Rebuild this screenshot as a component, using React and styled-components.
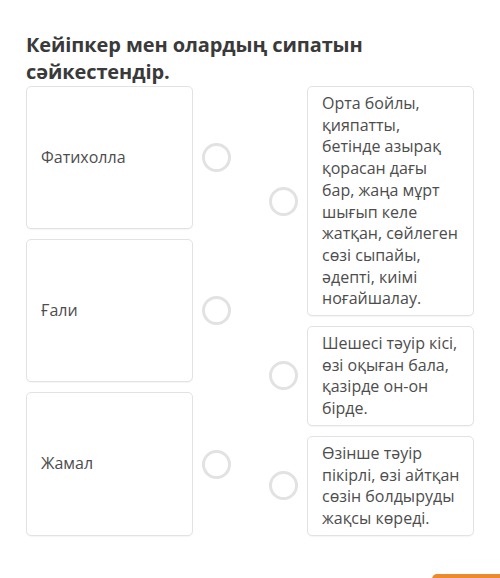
import React from "react";
import styled, { createGlobalStyle } from "styled-components";

const GlobalStyle = createGlobalStyle`
  html, body {
    margin: 0;
    padding: 0;
    background: #fff;
    overflow: hidden;
    font-family: "Open Sans", "Noto Sans", sans-serif;
  }
`;

const characters = ["Фатихолла", "Ғали", "Жамал"];

const traits = [
  "Орта бойлы, қияпатты, бетінде азырақ қорасан дағы бар, жаңа мұрт шығып келе жатқан, сөйлеген сөзі сыпайы, әдепті, киімі ноғайшалау.",
  "Шешесі тәуір кісі, өзі оқыған бала, қазірде он-он бірде.",
  "Өзінше тәуір пікірлі, өзі айтқан сөзін болдыруды жақсы көреді.",
];

const MatchPage = () => {
  return (
    <Wrapper>
      <GlobalStyle />
      <Title>Кейіпкер мен олардың сипатын сәйкестендір.</Title>
      <Board>
        {/* left column: characters */}
        <Column>
          {characters.map((name, index) => (
            <Item key={index} grow>
              <Card centered>{name}</Card>
              <Dot />
            </Item>
          ))}
        </Column>
        {/* right column: descriptions */}
        <Column>
          {traits.map((text, index) => (
            <Item key={index}>
              <Dot />
              <Card>{text}</Card>
            </Item>
          ))}
        </Column>
      </Board>
      <Footer>
        <NextButton type="button" />
      </Footer>
    </Wrapper>
  );
};

const Wrapper = styled.section`
  width: 500px;
  height: 578px;
  padding: 31px 26px 0;
  box-sizing: border-box;
`;

const Title = styled.h2`
  margin: 0 0 1px;
  font-size: 20px;
  line-height: 27px;
  font-weight: 700;
  letter-spacing: -0.1px;
  color: #3a3a3a;
`;

const Board = styled.div`
  display: flex;
  justify-content: space-between;
  align-items: stretch;
`;

const Column = styled.div`
  display: flex;
  flex-direction: column;
  gap: 10px;
  width: 205px;
`;

const Item = styled.div`
  display: flex;
  align-items: center;
  gap: 9px;
  flex: ${(p) => (p.grow ? "1" : "0 0 auto")};
  align-self: stretch;
`;

const Card = styled.div`
  flex: 1;
  align-self: stretch;
  display: flex;
  align-items: ${(p) => (p.centered ? "center" : "flex-start")};
  box-sizing: border-box;
  padding: ${(p) => (p.centered ? "6px 14px" : "6px 12px 5px 14px")};
  border: 1px solid #e2e2e2;
  border-radius: 5px;
  background: #fff;
  box-shadow: 0 1px 1px rgba(0, 0, 0, 0.04);
  font-size: 16px;
  line-height: 21.7px;
  color: #4d4d4d;
`;

const Dot = styled.span`
  flex: 0 0 auto;
  width: 29px;
  height: 29px;
  box-sizing: border-box;
  border: 3px solid #e2e2e2;
  border-radius: 50%;
  background: #fff;
`;

const Footer = styled.div`
  display: flex;
  justify-content: flex-end;
  margin: 38px -52px 0 0;
`;

const NextButton = styled.button`
  width: 94px;
  height: 36px;
  border: none;
  border-radius: 5px;
  background: #ec8a2c;
`;

export default MatchPage;
